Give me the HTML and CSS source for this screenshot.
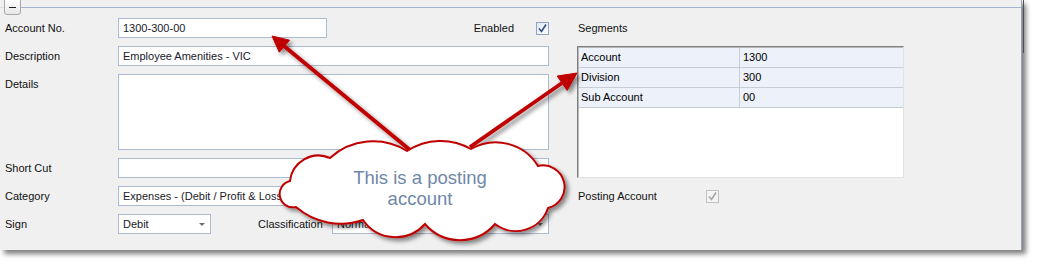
FILE: index.html
```html
<!DOCTYPE html>
<html lang="en">
<head>
    <meta charset="UTF-8">
    <title>Account</title>
    <link rel="stylesheet" href="styles.css">
</head>
<body>
<div class="panel">
    <div class="group-head">
        <span class="head-line short"></span>
        <span class="collapse-btn"><span class="minus"></span></span>
        <span class="head-line"></span>
    </div>

    <div class="form">
        <!-- row 1 -->
        <div class="label">Account No.</div>
        <div class="field-row">
            <div class="field account-field">1300-300-00</div>
            <span class="label enabled-label">Enabled</span>
            <span class="check"><svg width="11" height="11" viewBox="0 0 11 11"><path d="M2 5.5 L4.5 8.5 L9 1.5" fill="none" stroke="#2f4f86" stroke-width="1.6"/></svg></span>
        </div>
        <div></div>
        <div class="label seg-label">Segments</div>

        <!-- row 2 -->
        <div class="label">Description</div>
        <div class="field">Employee Amenities - VIC</div>
        <div></div>
        <div class="segments">
            <div class="seg-row"><span class="seg-name">Account</span><span class="seg-val">1300</span></div>
            <div class="seg-row"><span class="seg-name">Division</span><span class="seg-val">300</span></div>
            <div class="seg-row"><span class="seg-name">Sub Account</span><span class="seg-val">00</span></div>
        </div>

        <!-- row 3 -->
        <div class="label top">Details</div>
        <div class="field"></div>
        <div></div>

        <!-- row 4 -->
        <div class="label">Short Cut</div>
        <div class="field"></div>
        <div></div>

        <!-- row 5 -->
        <div class="label">Category</div>
        <div class="field combo">Expenses - (Debit / Profit &amp; Loss)<span class="arrow"></span></div>
        <div></div>
        <div class="posting">
            <span class="label">Posting Account</span>
            <span class="check disabled"><svg width="11" height="11" viewBox="0 0 11 11"><path d="M2 5.5 L4.5 8.5 L9 1.5" fill="none" stroke="#a8a8a8" stroke-width="1.6"/></svg></span>
        </div>

        <!-- row 6 -->
        <div class="label">Sign</div>
        <div class="field-row">
            <div class="field combo sign-combo">Debit<span class="arrow"></span></div>
            <span class="label class-label">Classification</span>
            <div class="field combo class-combo">Normal<span class="arrow"></span></div>
        </div>
    </div>
</div>

<svg class="callout" width="1039" height="266" viewBox="0 0 1039 266">
    <defs>
        <filter id="shadow" x="-20%" y="-20%" width="150%" height="150%">
            <feDropShadow dx="3" dy="3" stdDeviation="2" flood-color="#000" flood-opacity="0.45"/>
        </filter>
    </defs>
    <g fill="#c00000" stroke="#c00000" filter="url(#shadow)">
        <line x1="410" y1="150" x2="284" y2="46" stroke-width="3.8"/>
        <polygon points="272,36 289.5,40.2 279.3,52.2" stroke-width="1"/>
        <line x1="470" y1="147" x2="562" y2="83" stroke-width="3.8"/>
        <polygon points="577,73 567.2,90.4 557.2,76" stroke-width="1"/>
    </g>
    <path filter="url(#shadow)" fill="#fff" stroke="#c00000" stroke-width="2"
          d="M290,181 A28.6,28.6 0 0 1 330,158 A64,64 0 0 1 407,151 A61,61 0 0 1 471,149 A49.5,49.5 0 0 1 538,166 A21.5,21.5 0 0 1 548,208 A34,34 0 0 1 495,224 A46,46 0 0 1 425,224 A39.5,39.5 0 0 1 363,220 A68.7,68.7 0 0 1 296,207 A12.9,12.9 0 0 1 290,181 Z"/>
    <text class="cloud-text" x="420" y="184">This is a posting</text>
    <text class="cloud-text" x="420" y="205">account</text>
</svg>
</body>
</html>
```

FILE: styles.css
```css
body {
    margin: 0;
    background-color: #ffffff;
    font-family: "Liberation Sans", Arial, sans-serif;
    font-size: 11px;
    color: #000;
    position: relative;
    width: 1039px;
    height: 266px;
    overflow: hidden;
}

.panel {
    position: relative;
    width: 1021px;
    height: 250px;
    background-color: #f0f0f0;
    border-right: 1px solid #8fa3c4;
    box-shadow: 4px 4px 5px rgba(0, 0, 0, 0.5);
}
.panel::after {
    content: "";
    position: absolute;
    right: -3px;
    top: 0;
    width: 1px;
    height: 53px;
    background-color: #505050;
}

.group-head {
    display: flex;
    align-items: flex-start;
    height: 14px;
}
.head-line {
    flex: 1;
    height: 1px;
    margin-top: 7px;
    background-color: #a3b4d0;
}
.head-line.short {
    flex: none;
    width: 4px;
    background-color: #d6dce6;
}
.collapse-btn {
    width: 15px;
    height: 14px;
    margin-top: -1px;
    border: 1px solid #a9a9a9;
    border-radius: 0 0 3px 3px;
    background: linear-gradient(#ffffff, #e6e6e6);
    display: flex;
    align-items: center;
    justify-content: center;
}
.minus {
    width: 7px;
    height: 1px;
    background-color: #222;
}

.form {
    display: grid;
    grid-template-columns: 113px 431px 28px 327px;
    grid-template-rows: 20px 20px 76px 20px 20px 20px;
    row-gap: 8px;
    padding-left: 5px;
    margin-top: 4px;
}

.label {
    line-height: 20px;
    white-space: nowrap;
    color: #111;
}
.label.top {
    align-self: start;
}

.field {
    box-sizing: border-box;
    height: 100%;
    background-color: #fff;
    border: 1px solid #abbbd4;
    padding: 0 4px;
    line-height: 18px;
    color: #1a1a2a;
    white-space: nowrap;
    overflow: hidden;
    position: relative;
}

.field-row {
    display: flex;
    align-items: center;
}
.account-field {
    width: 209px;
}
.enabled-label {
    margin-left: auto;
    margin-right: 22px;
}

.check {
    box-sizing: border-box;
    width: 13px;
    height: 13px;
    border: 1px solid #8ea4c6;
    background: linear-gradient(135deg, #dfe6f0, #ffffff);
    display: flex;
    align-items: center;
    justify-content: center;
}
.check.disabled {
    border-color: #c2c2c2;
    background: #f4f4f4;
}

.combo {
    padding-right: 14px;
}
.arrow {
    position: absolute;
    right: 5px;
    top: 8px;
    width: 0;
    height: 0;
    border-left: 3px solid transparent;
    border-right: 3px solid transparent;
    border-top: 3px solid #6e6e6e;
}
.sign-combo {
    width: 93px;
}
.class-label {
    margin-left: 47px;
}
.class-combo {
    width: 217px;
    margin-left: auto;
}

.seg-label {
    padding-left: 1px;
}

.segments {
    grid-column: 4;
    grid-row: 2 / 5;
    box-sizing: border-box;
    background-color: #fff;
    border: 1px solid;
    border-color: #7f7f7f #e2e2e2 #e2e2e2 #7f7f7f;
    box-shadow: inset 1px 1px 0 #b9b9b9;
    padding: 1px 0 0 1px;
}
.seg-row {
    display: flex;
    height: 20px;
    background-color: #edf1f9;
    border-bottom: 1px solid #c9ced6;
    box-sizing: border-box;
    line-height: 19px;
}
.seg-name {
    width: 158px;
    padding-left: 2px;
    border-right: 1px solid #c9ced6;
}
.seg-val {
    padding-left: 3px;
}

.posting {
    display: flex;
    align-items: center;
    padding-left: 1px;
}
.posting .check {
    margin-left: 49px;
}

.callout {
    position: absolute;
    left: 0;
    top: 0;
    pointer-events: none;
}
.cloud-text {
    font-family: "Liberation Sans", Arial, sans-serif;
    font-size: 18.5px;
    fill: #6f87a8;
    text-anchor: middle;
}
```
